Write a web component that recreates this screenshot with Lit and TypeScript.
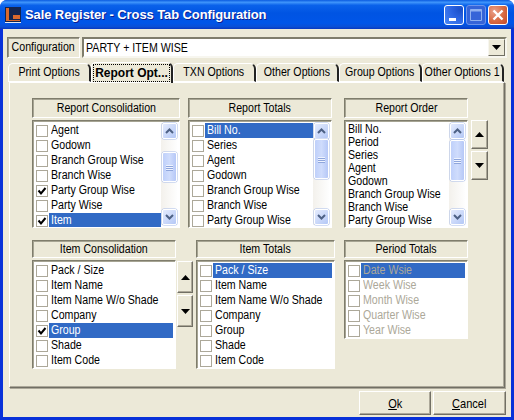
import { LitElement, html, css } from "lit";
import { customElement } from "lit/decorators.js";

type Row = { t: string; c?: boolean; s?: boolean };
const rows = (names: string[], checked: string[] = [], sel = "") =>
  names.map((t) => ({ t, c: checked.includes(t), s: t === sel }));

const arrow = (d: "up" | "down") =>
  html`<svg class="tri" width="9" height="5" viewBox="0 0 9 5">
    <path d=${d === "up" ? "M4.5 0 9 5H0z" : "M0 0h9L4.5 5z"} fill="#000"></path>
  </svg>`;

const chev = (up: boolean) =>
  html`<svg width="9" height="6" viewBox="0 0 9 6">
    <path d=${up ? "M1 5 4.5 1.5 8 5" : "M1 1 4.5 4.5 8 1"} fill="none" stroke="#4d6185" stroke-width="2"></path>
  </svg>`;

@customElement("app-root")
export class AppRoot extends LitElement {
  static styles = css`
    :host {
      display: block;
      width: 514px;
      height: 420px;
      font-family: "Liberation Sans", Arial, sans-serif;
      font-size: 12.5px;
      color: #000;
    }
    * { box-sizing: border-box; }
    .n, .c { display: inline-block; white-space: nowrap; transform: scaleX(0.85); }
    .n { transform-origin: left center; margin-right: -20px; }
    .c { transform-origin: center center; }
    .win {
      width: 514px;
      height: 420px;
      display: flex;
      flex-direction: column;
      background: #0831d9;
      border-radius: 7px 7px 0 0;
      overflow: hidden;
    }
    .title {
      height: 29px;
      flex: none;
      display: flex;
      align-items: center;
      padding: 0 6px 0 5px;
      gap: 4px;
      background: linear-gradient(180deg, #0a5be0 0%, #3f95fb 8%, #0a62ea 18%, #0054e3 45%, #0055e8 80%, #0a4fd6 92%, #0837c0 100%);
    }
    .title .cap {
      flex: 1;
      color: #fff;
      font-weight: bold;
      font-size: 13px;
      letter-spacing: -0.1px;
      white-space: nowrap;
      text-shadow: 1px 1px 0 #0f1f8f;
    }
    .tbs { display: flex; gap: 2px; }
    .tb {
      width: 20px;
      height: 20px;
      border: 1px solid #fff;
      border-radius: 3px;
      display: flex;
      align-items: center;
      justify-content: center;
    }
    .tb.min { background: radial-gradient(circle at 85% 20%, #1a4fc8 0%, #2a62e0 40%, #4a88f6 100%); }
    .tb.max { background: #3564d8; border-color: #6d93ea; }
    .tb.close { background: radial-gradient(circle at 30% 30%, #e9a08a 0%, #d86a42 55%, #c2492a 100%); }
    .body {
      flex: 1;
      margin: 0 3px 3px 3px;
      background: #ece9d8;
      padding: 8px 4px 0 4px;
      display: flex;
      flex-direction: column;
      min-height: 0;
    }
    .cfg { display: flex; gap: 2px; height: 21px; flex: none; }
    .cfg .lbl {
      width: 73px;
      border: 1px solid;
      border-color: #7f7d6c #fff #fff #7f7d6c;
      box-shadow: inset 1px 1px 0 #9a9888;
      display: flex;
      align-items: center;
      justify-content: center;
      padding-bottom: 2px;
    }
    .combo {
      flex: 1;
      background: #fff;
      border: 2px solid;
      border-color: #7f7d6c #f7f6ef #f7f6ef #7f7d6c;
      display: flex;
      align-items: center;
      padding-left: 2px;
      justify-content: space-between;
    }
    .drop {
      width: 17px;
      height: 17px;
      background: #ece9d8;
      border: 1px solid;
      border-color: #f7f6ef #716f64 #716f64 #f7f6ef;
      display: flex;
      align-items: center;
      justify-content: center;
    }
    .tabs {
      flex: none;
      height: 19px;
      margin-top: 5px;
      display: flex;
      padding-left: 1px;
      position: relative;
      z-index: 1;
    }
    .tab {
      height: 19px;
      border-top: 1px solid #fff;
      border-left: 1px solid #fff;
      border-right: 2px solid #222;
      border-radius: 5px 6px 0 0;
      border-bottom: 1px solid #fff;
      display: flex;
      align-items: center;
      justify-content: center;
      white-space: nowrap;
      padding-bottom: 1px;
    }
    .tab.on {
      font-weight: bold;
      font-size: 12px;
      height: 21px;
      margin-top: -1px;
      border-bottom: none;
    }
    .tab.on .b { outline: 1px dotted #000; outline-offset: 1px; }
    .panel {
      flex: 1 0 0;
      min-height: 0;
      margin: 0 2px 0 2px;
      border: 1px solid;
      border-color: #fff #716f64 #716f64 #fff;
      box-shadow: 1px 1px 0 #aca899, inset -1px -1px 0 #aca899;
      padding: 15px 0 0 22px;
      display: flex;
      flex-direction: column;
    }
    .row { display: flex; align-items: flex-start; }
    .row.top { height: 142px; }
    .g { display: flex; flex-direction: column; flex: none; }
    .hd {
      height: 20px;
      border: 1px solid;
      border-color: #7f7d6c #fff #fff #7f7d6c;
      box-shadow: inset 1px 1px 0 #a6a493;
      display: flex;
      align-items: center;
      justify-content: center;
      flex: none;
    }
    .bottom .hd { height: 18px; }
    .list {
      margin-top: 2px;
      border: 1px solid;
      border-color: #7f7d6c #fff #fff #7f7d6c;
      box-shadow: inset 1px 1px 0 #a6a493;
      background: #fff;
      padding: 2px;
      display: flex;
      overflow: hidden;
      flex: none;
    }
    .items { flex: 1; min-width: 0; }
    .it {
      height: 15px;
      display: flex;
      align-items: center;
      white-space: nowrap;
    }
    .cb {
      width: 12px;
      height: 12px;
      border: 1px solid #aca899;
      background: #fff;
      margin: 0 1px 0 1px;
      flex: none;
      display: flex;
      align-items: center;
      justify-content: center;
    }
    .t { flex: 1; min-width: 0; height: 15px; line-height: 14px; padding-left: 2px; }
    .it.sel .t { background: #316ac5; color: #fff; }
    .off .it { color: #aca899; }
    .off .it.sel .t { color: #aca899; }
    .plain .it { height: 13px; }
    .plain .t { height: 13px; line-height: 12px; padding-left: 0; }
    .plain .items { padding-left: 1px; }
    .sb {
      width: 16px;
      flex: none;
      display: flex;
      flex-direction: column;
      background: linear-gradient(90deg, #f3f1ec, #fefefe);
      justify-content: space-between;
      position: relative;
    }
    .sbtn {
      width: 15px;
      height: 16px;
      margin-left: 1px;
      border-radius: 2px;
      border: 1px solid #fff;
      background: linear-gradient(135deg, #e4ebfd, #b4c8f6);
      box-shadow: 0 0 0 0.5px #a8bbe8;
      display: flex;
      align-items: center;
      justify-content: center;
    }
    .thumb {
      position: absolute;
      left: 1px;
      width: 15px;
      border-radius: 2px;
      border: 1px solid #fff;
      background: linear-gradient(90deg, #bfd0fa, #cfdcfc 50%, #b6c8f7);
      box-shadow: 0 0 0 0.5px #a8bbe8;
      display: flex;
      flex-direction: column;
      align-items: center;
      justify-content: center;
      gap: 1px;
    }
    .thumb i { display: block; width: 7px; height: 1px; background: #eef3ff; box-shadow: 0 1px 0 #8fa6dc; }
    .updn { display: flex; flex-direction: column; gap: 2px; flex: none; }
    .ud {
      background: #ece9d8;
      border: 1px solid;
      border-color: #fff #716f64 #716f64 #fff;
      box-shadow: inset -1px -1px 0 #aca899;
      display: flex;
      align-items: center;
      justify-content: center;
      flex: none;
    }
    .foot {
      flex: none;
      height: 26px;
      margin-top: 3px;
      display: flex;
      justify-content: flex-end;
      gap: 2px;
      padding-right: 1px;
    }
    .btn {
      height: 24px;
      background: #ece9d8;
      border: 1px solid;
      border-color: #fff #716f64 #716f64 #fff;
      box-shadow: inset -1px -1px 0 #aca899;
      display: flex;
      align-items: center;
      justify-content: center;
      font-size: 13px;
    }
    .btn.ok { width: 72px; }
    .btn.cancel { width: 73px; }
  `;

  private list(items: Row[], w: number, h: number, thumb?: [number, number], plain = false) {
    return html`<div class="list ${plain ? "plain" : ""}" style="width:${w}px;height:${h}px">
      <div class="items">
        ${items.map(
          (r) => html`<div class="it ${r.s ? "sel" : ""}">
            ${plain
              ? ""
              : html`<span class="cb">${r.c
                  ? html`<svg width="10" height="10" viewBox="0 0 10 10"><path d="M1.5 4.5 4 7.5 8.5 2" fill="none" stroke="#000" stroke-width="2"></path></svg>`
                  : ""}</span>`}
            <span class="t"><span class="n">${r.t}</span></span>
          </div>`
        )}
      </div>
      ${thumb
        ? html`<div class="sb">
            <div class="sbtn">${chev(true)}</div>
            <div class="thumb" style="top:${thumb[0]}px;height:${thumb[1]}px"><i></i><i></i><i></i></div>
            <div class="sbtn">${chev(false)}</div>
          </div>`
        : ""}
    </div>`;
  }

  render() {
    const tabs: [string, number, boolean?][] = [
      ["Print Options", 83],
      ["Report Opt...", 82, true],
      ["TXN Options", 83],
      ["Other Options", 83],
      ["Group Options", 83],
      ["Other Options 1", 82],
    ];
    const rc = rows(["Agent", "Godown", "Branch Group Wise", "Branch Wise", "Party Group Wise", "Party Wise", "Item"], ["Party Group Wise", "Item"], "Item");
    const rt = rows(["Bill No.", "Series", "Agent", "Godown", "Branch Group Wise", "Branch Wise", "Party Group Wise"], [], "Bill No.");
    const ro = rows(["Bill No.", "Period", "Series", "Agent", "Godown", "Branch Group Wise", "Branch Wise", "Party Group Wise"]);
    const names = ["Pack / Size", "Item Name", "Item Name W/o Shade", "Company", "Group", "Shade", "Item Code"];
    const ic = rows(names, ["Group"], "Group");
    const it = rows(names, [], "Pack / Size");
    const pt = rows(["Date Wsie", "Week Wise", "Month Wise", "Quarter Wise", "Year Wise"], [], "Date Wsie");
    return html`<div class="win">
      <div class="title">
        <svg width="16" height="16" viewBox="0 0 16 16">
          <rect width="16" height="16" fill="#14254f"></rect>
          <rect x="1" y="1" width="3" height="13" fill="#d9692e"></rect>
          <rect x="8" y="8" width="7" height="4" fill="#d9692e"></rect>
          <rect x="1" y="13" width="14" height="1" fill="#d9692e"></rect>
          <rect x="0" y="15" width="16" height="1" fill="#e8e8f0"></rect>
        </svg>
        <span class="cap">Sale Register - Cross Tab Configuration</span>
        <div class="tbs">
          <div class="tb min"><svg width="18" height="18" viewBox="0 0 18 18"><rect x="4" y="12" width="7" height="3" fill="#fff"></rect></svg></div>
          <div class="tb max"><svg width="18" height="18" viewBox="0 0 18 18"><path d="M3.5 3.5h11v11h-11z" fill="none" stroke="#8fb0f0"></path><path d="M3.5 4.5h11" stroke="#8fb0f0" stroke-width="2"></path></svg></div>
          <div class="tb close"><svg width="18" height="18" viewBox="0 0 18 18"><path d="M4.5 4.5 13.5 13.5M13.5 4.5 4.5 13.5" stroke="#fff" stroke-width="2.4"></path></svg></div>
        </div>
      </div>
      <div class="body">
        <div class="cfg">
          <div class="lbl"><span class="c">Configuration</span></div>
          <div class="combo"><span class="n">PARTY + ITEM WISE</span><div class="drop">${arrow("down")}</div></div>
        </div>
        <div class="tabs">
          ${tabs.map(
            ([t, w, on]) => html`<div class="tab ${on ? "on" : ""}" style="width:${w}px"><span class=${on ? "b" : "c"}>${t}</span></div>`
          )}
        </div>
        <div class="panel">
          <div class="row top">
            <div class="g" style="width:148px;margin-right:8px">
              <div class="hd"><span class="c">Report Consolidation</span></div>
              ${this.list(rc, 148, 108, [29, 30])}
            </div>
            <div class="g" style="width:144px;margin-right:12px">
              <div class="hd"><span class="c">Report Totals</span></div>
              ${this.list(rt, 144, 108, [16, 40])}
            </div>
            <div class="g" style="width:124px;margin-right:3px">
              <div class="hd"><span class="c">Report Order</span></div>
              ${this.list(ro, 124, 108, [17, 41], true)}
            </div>
            <div class="updn" style="margin-top:22px">
              <div class="ud" style="width:17px;height:29px">${arrow("up")}</div>
              <div class="ud" style="width:17px;height:29px">${arrow("down")}</div>
            </div>
          </div>
          <div class="row bottom">
            <div class="g" style="width:144px">
              <div class="hd"><span class="c">Item Consolidation</span></div>
              ${this.list(ic, 144, 109)}
            </div>
            <div class="updn" style="margin:21px 3px 0 1px">
              <div class="ud" style="width:16px;height:32px">${arrow("up")}</div>
              <div class="ud" style="width:16px;height:32px">${arrow("down")}</div>
            </div>
            <div class="g" style="width:139px;margin-right:9px">
              <div class="hd"><span class="c">Item Totals</span></div>
              ${this.list(it, 139, 109)}
            </div>
            <div class="g off" style="width:124px">
              <div class="hd" style="color:#000"><span class="c">Period Totals</span></div>
              ${this.list(pt, 124, 79)}
            </div>
          </div>
        </div>
        <div class="foot">
          <div class="btn ok"><span class="c"><u>O</u>k</span></div>
          <div class="btn cancel"><span class="c"><u>C</u>ancel</span></div>
        </div>
      </div>
    </div>`;
  }
}
